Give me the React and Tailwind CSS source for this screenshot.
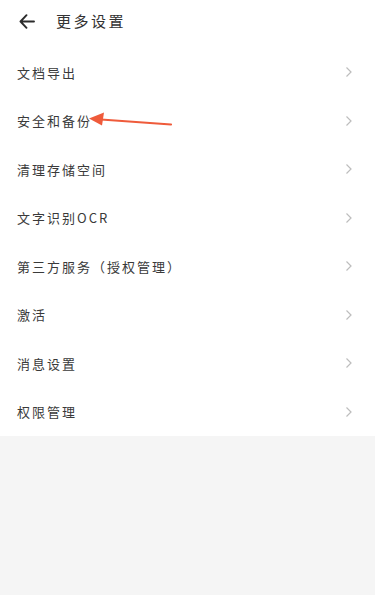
const items = [
  "文档导出",
  "安全和备份",
  "清理存储空间",
  "文字识别OCR",
  "第三方服务（授权管理）",
  "激活",
  "消息设置",
  "权限管理",
];

function Chevron() {
  return (
    <svg width="8" height="12" viewBox="0 0 8 12" fill="none" stroke="#bdbdbd" strokeWidth="1.2">
      <path d="M1.5 1.5 L6 6 L1.5 10.5" />
    </svg>
  );
}

export default function App() {
  return (
    <div
      className="relative w-[380px] h-[595px] bg-white overflow-hidden"
      style={{ fontFamily: '"Noto Sans CJK SC", "Noto Sans", sans-serif' }}
    >
      <div className="flex h-full">
        <div className="flex-1 flex flex-col">
          <div className="bg-white">
            <div className="h-[48px] flex items-start pt-[11px] pl-[19px]">
              <div className="h-[20px] flex items-center">
                <svg width="16" height="15" viewBox="0 0 16 15" fill="none" stroke="#2b2b2b" strokeWidth="1.9" strokeLinecap="round" strokeLinejoin="round">
                  <path d="M15 7.5 H1.5 M7.5 1.2 L1.5 7.5 L7.5 13.8" />
                </svg>
              </div>
              <span className="ml-[21px] leading-[20px] text-[15px] tracking-[2.5px] text-[#333]">更多设置</span>
            </div>
            {items.map((t) => (
              <div key={t} className="h-[48.5px] flex items-center justify-between pl-[17px] pr-[22px]">
                <span className="text-[13px] tracking-[2px] text-[#3a3a3a]">{t}</span>
                <Chevron />
              </div>
            ))}
          </div>
          <div className="flex-1 bg-[#f5f5f5]" />
        </div>
        <div className="w-[5px] bg-white" />
      </div>

      {/* red annotation arrow */}
      <svg className="absolute left-0 top-0" width="380" height="595" viewBox="0 0 380 595">
        <path d="M171 124.5 L101 119.5" stroke="#ef5b3b" strokeWidth="2.2" strokeLinecap="round" />
        <path d="M89 118.5 L104 112.5 L102 125.5 Z" fill="#ef5b3b" />
      </svg>
    </div>
  );
}
